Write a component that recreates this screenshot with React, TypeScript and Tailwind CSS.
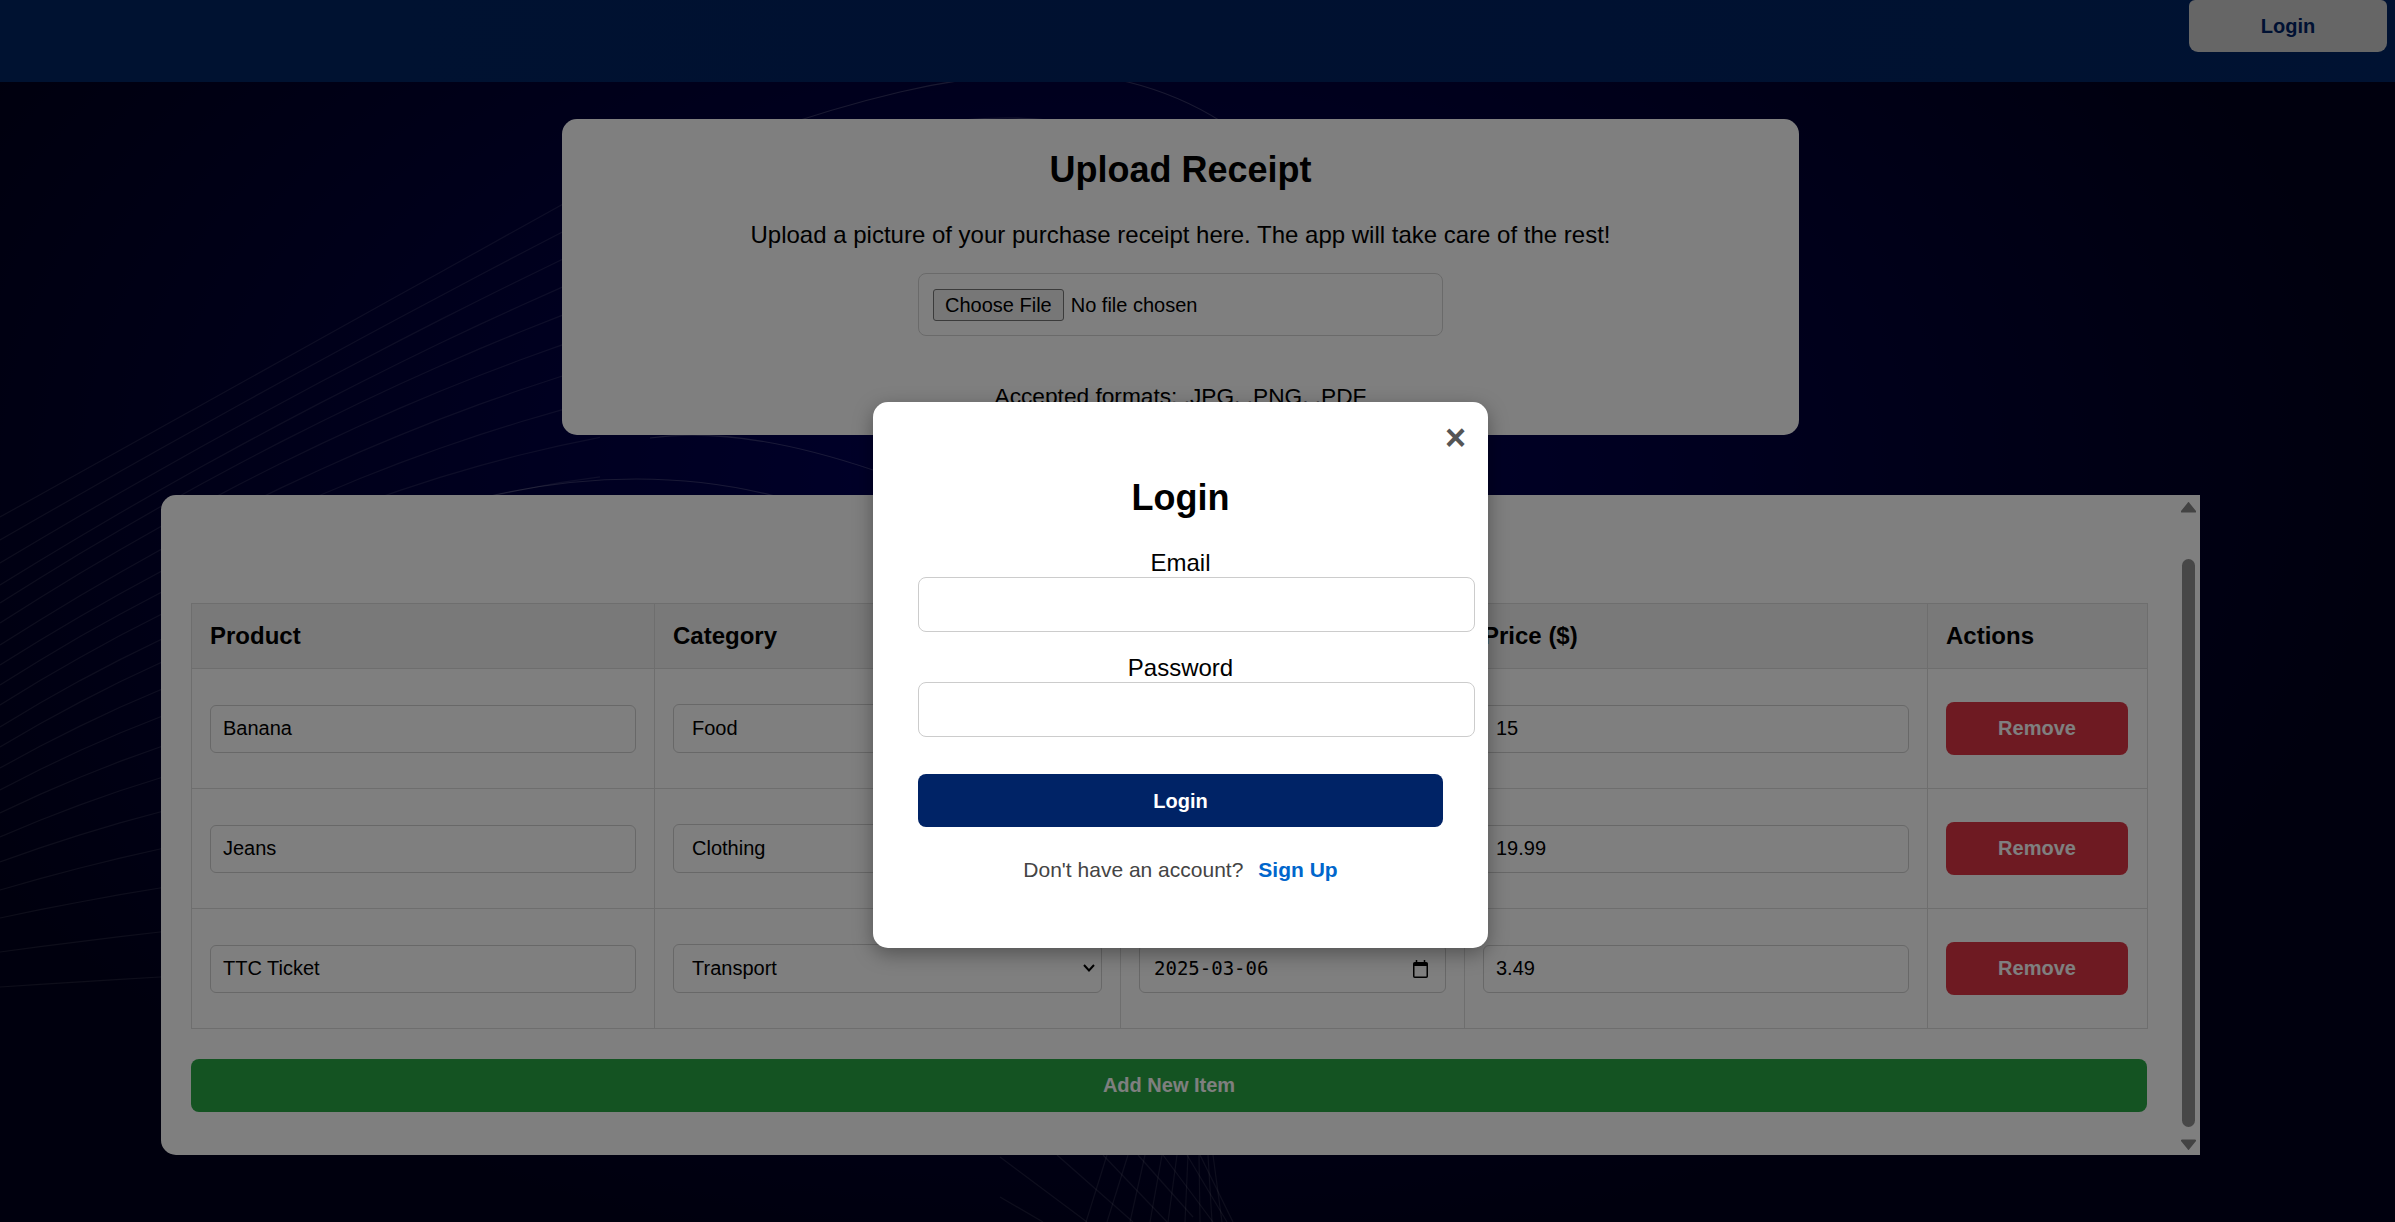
import React from "react";

const rows = [
  { name: "Banana", category: "Food", date: "2025-03-06", price: "15" },
  { name: "Jeans", category: "Clothing", date: "2025-03-06", price: "19.99" },
  { name: "TTC Ticket", category: "Transport", date: "2025-03-06", price: "3.49" },
];

const inputCls =
  "block h-[48px] w-full rounded-[6px] border border-[#d0d0d0] bg-white px-[12px] text-[20px] text-black outline-none";

// [y at x=0, y at x=160, y at x=520] for the fan of lines on the left
const fan = [
  [517, 428, 228],
  [540, 449, 254],
  [563, 470, 280],
  [585, 490, 306],
  [603, 507, 332],
  [623, 527, 360],
  [645, 550, 390],
  [665, 572, 422],
  [685, 593, 455],
  [705, 615, 490],
  [727, 640, 530],
  [747, 663, 560],
  [768, 690, 600],
  [790, 717, 640],
  [813, 747, 680],
  [837, 778, 720],
  [862, 812, 760],
  [890, 849, 800],
  [918, 888, 850],
  [952, 932, 900],
  [987, 977, 960],
];

const fanPath = ([a, b, c]: number[]) => {
  const pts: string[] = [];
  for (let x = 0; x <= 600; x += 40) {
    const l0 = ((x - 160) * (x - 520)) / (160 * 520);
    const l1 = (x * (x - 520)) / (160 * -360);
    const l2 = (x * (x - 160)) / (520 * 360);
    pts.push(`${x} ${(a * l0 + b * l1 + c * l2).toFixed(1)}`);
  }
  return "M" + pts.join(" L");
};

const bottomLines = [
  [1000, 1157, 1087, 1222],
  [1057, 1155, 1133, 1222],
  [1103, 1155, 1167, 1222],
  [1138, 1155, 1193, 1217],
  [1163, 1155, 1213, 1222],
  [1187, 1155, 1227, 1222],
  [1200, 1155, 1233, 1222],
  [1000, 1197, 1043, 1222],
  [1086, 1222, 1107, 1155],
  [1107, 1222, 1128, 1155],
  [1130, 1222, 1145, 1155],
  [1150, 1222, 1162, 1155],
  [1168, 1222, 1177, 1155],
  [1185, 1222, 1188, 1155],
  [1200, 1222, 1199, 1155],
  [1212, 1222, 1208, 1155],
  [1222, 1222, 1213, 1155],
];

const Lines = () => (
  <svg className="absolute inset-0 h-full w-full" viewBox="0 0 2395 1222" fill="none">
    <g stroke="#ffffff" strokeOpacity="0.11" strokeWidth="1.2">
      {fan.map((f, i) => (
        <path key={i} d={fanPath(f)} />
      ))}
      {bottomLines.map(([x1, y1, x2, y2], i) => (
        <line key={i} x1={x1} y1={y1} x2={x2} y2={y2} />
      ))}
    </g>
    <g stroke="#ffffff" strokeOpacity="0.2" strokeWidth="1.2">
      <path d="M600 200 Q760 125 900 92 Q1030 62 1128 82 Q1180 95 1222 122" />
      <path d="M960 120 Q1010 116 1050 120" />
      <path d="M650 438 Q740 425 873 470" />
      <path d="M490 496 Q640 462 775 496" />
    </g>
  </svg>
);

const Arrow = ({ down }: { down?: boolean }) => (
  <svg
    viewBox="0 0 15 11"
    className={down ? "-mx-px h-[11px] w-[15px] shrink-0 rotate-180" : "-mx-px h-[11px] w-[15px] shrink-0"}
  >
    <path d="M7.5 0 Q8 0 8.5 1 L15 9 Q15.5 10.5 14 10.5 H1 Q-0.5 10.5 0 9 L6.5 1 Q7 0 7.5 0 Z" fill="#868686" />
  </svg>
);

const CalendarIcon = () => (
  <svg viewBox="0 0 17 18" className="h-[18px] w-[17px] shrink-0" fill="none">
    <path d="M4.5 0 V2 M12.5 0 V2" stroke="#000" strokeWidth="1.5" />
    <rect x="1.75" y="2.75" width="13.5" height="14.5" rx="1" stroke="#000" strokeWidth="1.5" />
    <rect x="2" y="3" width="13" height="3" fill="#000" />
  </svg>
);

const Chevron = () => (
  <svg
    viewBox="0 0 12 8"
    className="pointer-events-none absolute right-[7px] top-[20px] h-[8px] w-[12px]"
    fill="none"
  >
    <path d="M1 1 L6 6.5 L11 1" stroke="#000" strokeWidth="2" />
  </svg>
);

export default function App() {
  return (
    <div className="relative h-screen w-full overflow-hidden bg-[radial-gradient(ellipse_1300px_800px_at_1100px_480px,#00005c,#00001c)] font-['Liberation_Sans',Arial,sans-serif] text-black">
      <Lines />

      <header className="relative flex h-[82px] items-start justify-end bg-gradient-to-r from-[#002563] via-[#002261] to-[#002564] pr-[8px]">
        <button className="h-[52px] w-[198px] rounded-b-[9px] rounded-t-[6px] bg-[#cccccc] pb-[1px] text-[20px] font-bold text-[#002366]">
          Login
        </button>
      </header>

      <main className="relative flex flex-col items-center pr-[34px]">
        <section className="mt-[37px] flex h-[316px] w-[1237px] flex-col items-center rounded-[15px] bg-white pt-[30px]">
          <h2 className="text-[36px] font-bold leading-[41px]">Upload Receipt</h2>
          <p className="mt-[31px] text-[24px] leading-[27px]">
            Upload a picture of your purchase receipt here. The app will take care of the rest!
          </p>
          <div className="mt-[25px] flex h-[63px] w-[525px] items-center rounded-[8px] border border-[#d4d4d4] px-[14px]">
            <input
              type="file"
              className="text-[20px] file:mr-[7px] file:h-[32px] file:rounded-[3px] file:border file:border-[#767676] file:bg-[#efefef] file:px-[11px] file:text-[20px]"
            />
          </div>
          <p className="mt-[47px] text-[22.7px] leading-[27px]">Accepted formats: .JPG, .PNG, .PDF</p>
        </section>

        <section className="mt-[60px] flex h-[660px] w-[2039px] rounded-l-[15px] bg-white">
          <div className="min-w-0 flex-1 pl-[30px] pt-[108px]">
            <table className="w-[1956px] table-fixed border-collapse text-left">
              <colgroup>
                <col className="w-[463px]" />
                <col className="w-[466px]" />
                <col className="w-[344px]" />
                <col className="w-[463px]" />
                <col className="w-[220px]" />
              </colgroup>
              <thead>
                <tr className="h-[65px] bg-[#f2f2f2] text-[24px] font-bold">
                  <th className="border border-[#dddddd] px-[18px]">Product</th>
                  <th className="border border-[#dddddd] px-[18px]">Category</th>
                  <th className="border border-[#dddddd] px-[18px]">Date</th>
                  <th className="border border-[#dddddd] px-[18px]">Price ($)</th>
                  <th className="border border-[#dddddd] px-[18px]">Actions</th>
                </tr>
              </thead>
              <tbody>
                {rows.map((row) => (
                  <tr key={row.name} className="h-[120px]">
                    <td className="border border-[#dddddd] px-[18px]">
                      <input className={inputCls} defaultValue={row.name} />
                    </td>
                    <td className="border border-[#dddddd] px-[18px]">
                      <div className="relative">
                        <select
                          className="block h-[49px] w-full appearance-none rounded-[6px] border border-[#d0d0d0] bg-white px-[18px] pb-[2px] text-[20px] text-black outline-none"
                          defaultValue={row.category}
                        >
                          <option>Food</option>
                          <option>Clothing</option>
                          <option>Transport</option>
                        </select>
                        <Chevron />
                      </div>
                    </td>
                    <td className="border border-[#dddddd] px-[18px]">
                      <div className="flex h-[49px] w-full items-center rounded-[6px] border border-[#d0d0d0] bg-white pl-[14px] pr-[16px]">
                        <input
                          readOnly
                          defaultValue={row.date}
                          className="min-w-0 flex-1 bg-transparent font-['DejaVu_Sans_Mono',monospace] text-[19px] text-black outline-none"
                        />
                        <CalendarIcon />
                      </div>
                    </td>
                    <td className="border border-[#dddddd] px-[18px]">
                      <input className={inputCls} defaultValue={row.price} />
                    </td>
                    <td className="border border-[#dddddd] px-[18px]">
                      <button className="block h-[53px] w-[182px] rounded-[8px] bg-[#dc3545] pb-[2px] text-[20px] font-bold text-white">
                        Remove
                      </button>
                    </td>
                  </tr>
                ))}
              </tbody>
            </table>
            <button className="mt-[30px] block h-[53px] w-[1956px] rounded-[8px] bg-[#28a745] pb-[2px] text-[20px] font-bold text-white">
              Add New Item
            </button>
          </div>
          <div className="flex w-[18px] shrink-0 flex-col pr-[5px] pt-[7px]">
            <Arrow />
            <div className="mt-[46px] h-[568px] w-[13px] shrink-0 rounded-full bg-[#8e8e8e]" />
            <div className="mt-[12px]">
              <Arrow down />
            </div>
          </div>
        </section>
      </main>

      <div className="absolute inset-0 flex justify-center bg-black/50 pr-[34px]">
        <div className="relative mt-[402px] flex h-[546px] w-[615px] flex-col rounded-[15px] bg-white px-[45px] pt-[75px] shadow-[0_6px_20px_rgba(0,0,0,0.35)]">
          <span className="absolute right-[22px] top-[15px] text-[36px] font-bold leading-[41px] text-[#555555]">
            ×
          </span>
          <h2 className="text-center text-[36px] font-bold leading-[41px]">Login</h2>
          <label className="mt-[31px] pb-[1px] text-center text-[24px] leading-[27px]">Email</label>
          <input className="h-[55px] w-[557px] shrink-0 rounded-[8px] border border-[#cccccc] bg-white outline-none" />
          <label className="mt-[22px] pb-[1px] text-center text-[24px] leading-[27px]">Password</label>
          <input
            type="password"
            className="h-[55px] w-[557px] shrink-0 rounded-[8px] border border-[#cccccc] bg-white outline-none"
          />
          <button className="mt-[37px] h-[53px] w-full shrink-0 rounded-[8px] bg-[#002366] text-[20px] font-bold text-white">
            Login
          </button>
          <p className="mt-[31px] flex justify-center gap-[15px] text-[21px] leading-[24px] text-[#444444]">
            <span>Don't have an account?</span>
            <a className="font-bold text-[#0066cc]">Sign Up</a>
          </p>
        </div>
      </div>
    </div>
  );
}
